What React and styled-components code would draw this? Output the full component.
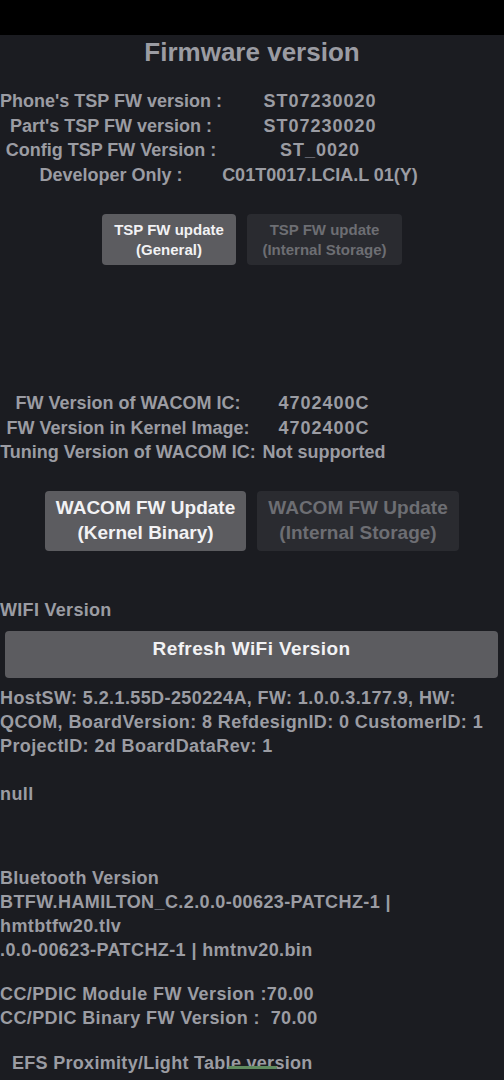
import React from 'react';
import styled, {createGlobalStyle} from 'styled-components';

const GlobalStyle = createGlobalStyle`
  html, body {
    margin: 0;
    padding: 0;
    background: #1b1c21;
  }
  body {
    font-family: "Liberation Sans", Arial, sans-serif;
    font-weight: bold;
    color: #9b9ca3;
    overflow: hidden;
  }
`;

const Screen = styled.div`
  width: 504px;
  height: 1080px;
  overflow: hidden;
  position: relative;
  background: #1b1c21;
`;

const StatusBar = styled.div`
  height: 35px;
  background: #000;
`;

const Title = styled.h1`
  margin: 0;
  font-size: 26px;
  line-height: 34px;
  text-align: center;
  color: #9b9ca3;
`;

const InfoTable = styled.div`
  display: grid;
  grid-template-columns: ${p => p.$cols};
  margin-top: ${p => p.$top}px;
  font-size: 18px;
  line-height: 24.5px;
  white-space: nowrap;

  & > span {
    text-align: center;
  }
`;

const Value = styled.span`
  letter-spacing: ${p => p.$spacing || 0}px;
`;

const ButtonRow = styled.div`
  display: flex;
  justify-content: center;
  gap: 11px;
  margin-top: ${p => p.$top}px;
`;

const FwButton = styled.button`
  font-family: inherit;
  font-weight: bold;
  border: none;
  border-radius: 4px;
  width: ${p => p.$w}px;
  height: ${p => p.$h}px;
  font-size: ${p => p.$size}px;
  line-height: 1.3;
  padding: 0;
  background: ${p => (p.disabled ? '#2a2b30' : '#5c5c60')};
  color: ${p => (p.disabled ? '#6d6e73' : '#f2f2f4')};
`;

const Heading = styled.div`
  font-size: 18px;
  line-height: 24px;
  letter-spacing: 0.3px;
  margin-top: ${p => p.$top || 0}px;
  padding-left: ${p => p.$indent || 0}px;
  white-space: nowrap;
`;

const WideButton = styled.button`
  display: block;
  font-family: inherit;
  font-weight: bold;
  margin: 9px 6px 0 5px;
  width: calc(100% - 11px);
  height: 47px;
  padding: 0 0 10px;
  border: none;
  border-radius: 4px;
  background: #5c5c60;
  color: #f2f2f4;
  font-size: 19px;
  letter-spacing: 0.4px;
`;

const TextBlock = styled.div`
  font-size: 18px;
  line-height: 24px;
  letter-spacing: 0.4px;
  margin-top: ${p => p.$top || 0}px;
  padding-left: ${p => p.$indent || 0}px;
  white-space: pre;
`;

const Underline = styled.div`
  position: absolute;
  left: 228px;
  top: 1066px;
  width: 49px;
  height: 3px;
  border-radius: 2px;
  background: #5f8a5f;
`;

const tspRows = [
  ["Phone's TSP FW version :", 'ST07230020'],
  ["Part's TSP FW version :", 'ST07230020'],
  ['Config TSP FW Version :', 'ST_0020'],
  ['Developer Only :', 'C01T0017.LCIA.L 01(Y)'],
];

const wacomRows = [
  ['FW Version of WACOM IC:', '4702400C', 1],
  ['FW Version in Kernel Image:', '4702400C', 1],
  ['Tuning Version of WACOM IC:', 'Not supported', 0],
];

const App = () => {
  return (
    <Screen>
      <GlobalStyle />
      <StatusBar />
      <Title>Firmware version</Title>

      <InfoTable $cols="222px 196px" $top={20}>
        {tspRows.map(([label, value]) => (
          <React.Fragment key={label}>
            <span>{label}</span>
            <Value $spacing={value.length < 12 ? 1 : 0}>{value}</Value>
          </React.Fragment>
        ))}
      </InfoTable>

      <ButtonRow $top={27}>
        <FwButton $w={134} $h={51} $size={15}>TSP FW update<br />(General)</FwButton>
        <FwButton $w={155} $h={51} $size={15} disabled>TSP FW update<br />(Internal Storage)</FwButton>
      </ButtonRow>

      <InfoTable $cols="256px 136px" $top={126}>
        {wacomRows.map(([label, value, spacing]) => (
          <React.Fragment key={label}>
            <span>{label}</span>
            <Value $spacing={spacing}>{value}</Value>
          </React.Fragment>
        ))}
      </InfoTable>

      <ButtonRow $top={26}>
        <FwButton $w={201} $h={60} $size={19}>WACOM FW Update<br />(Kernel Binary)</FwButton>
        <FwButton $w={202} $h={60} $size={19} disabled>WACOM FW Update<br />(Internal Storage)</FwButton>
      </ButtonRow>

      <Heading $top={47}>WIFI Version</Heading>
      <WideButton>Refresh WiFi Version</WideButton>
      <TextBlock $top={8}>
        {'HostSW: 5.2.1.55D-250224A, FW: 1.0.0.3.177.9, HW:\nQCOM, BoardVersion: 8 RefdesignID: 0 CustomerID: 1\nProjectID: 2d BoardDataRev: 1'}
      </TextBlock>
      <TextBlock $top={24}>null</TextBlock>

      <Heading $top={60}>Bluetooth Version</Heading>
      <TextBlock>
        {'BTFW.HAMILTON_C.2.0.0-00623-PATCHZ-1 |\nhmtbtfw20.tlv\n.0.0-00623-PATCHZ-1 | hmtnv20.bin'}
      </TextBlock>

      <TextBlock $top={20}>
        {'CC/PDIC Module FW Version :70.00\nCC/PDIC Binary FW Version :  70.00'}
      </TextBlock>

      <Heading $top={21} $indent={12}>EFS Proximity/Light Table version</Heading>
      <Heading>Kernel Proximity/Light Table version</Heading>
      <Underline />
    </Screen>
  );
};

export default App;
